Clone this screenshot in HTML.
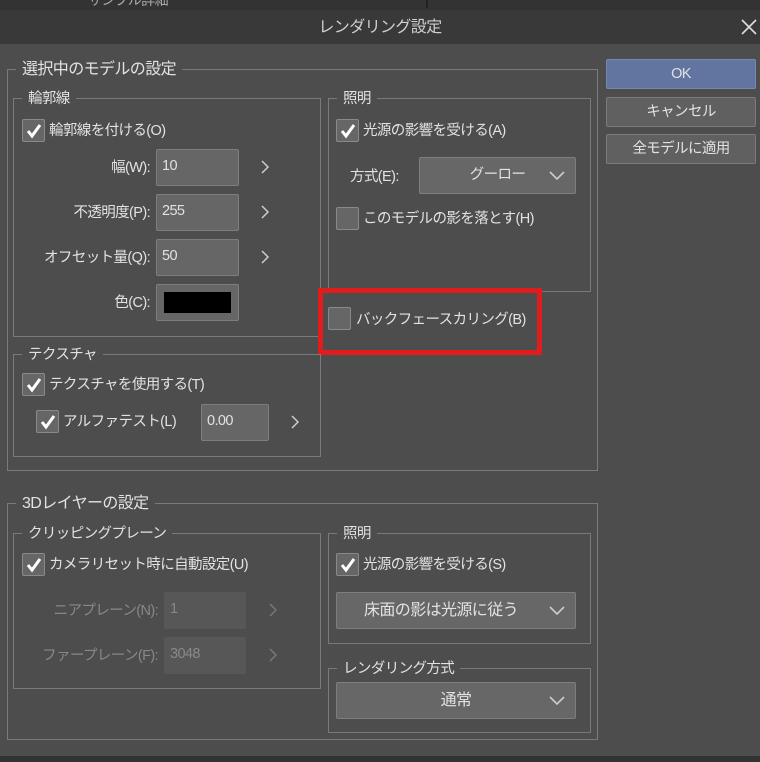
<!DOCTYPE html>
<html><head><meta charset="utf-8"><style>
*{margin:0;padding:0;box-sizing:border-box}
body{width:760px;height:762px;background:#4d4d4d;position:relative;overflow:hidden;font-family:"Liberation Sans","Noto Sans CJK JP",sans-serif;color:#e2e2e2;font-size:14.5px;letter-spacing:-0.6px}
.a{position:absolute;white-space:nowrap;line-height:25px}
.fr{position:absolute;border:1px solid #7a7a7a}
.lg{position:absolute;background:#4d4d4d;padding:0 6px;line-height:20px;top:-10px;left:8px}
.cb{position:absolute;width:23px;height:23px;border:1px solid #8a8a8a;background:#666;border-radius:2px}
.cb svg{position:absolute;left:2px;top:2px}
.in{position:absolute;background:#666;border:1px solid #7e7e7e;border-radius:2px;padding:6px 0 0 5px;line-height:20px}
.dis{background:#575757;border-color:#575757;color:#888}
.ar{position:absolute;width:10px;height:14px}
.dd{position:absolute;background:#676767;border:1px solid #7e7e7e;border-radius:2px;text-align:center;line-height:35px}
.dd svg{position:absolute;right:10px;top:13px}
.bt{position:absolute;left:606px;width:150px;height:30px;border:1px solid #7c7c7c;background:#606060;text-align:center;line-height:29px;border-radius:2px}
</style></head><body>
<div class="a" style="left:0;top:0;width:760px;height:44px;background:#393939"></div>
<div class="a" style="left:0;top:0;width:760px;height:10px;background:#333"></div>
<div class="a" style="left:88px;top:-12px;color:#aaa;font-size:14px">サンプル詳細</div>
<div class="a" style="left:426px;top:0;width:2px;height:8px;background:#222"></div>
<div class="a" style="left:0;top:15px;width:760px;text-align:center;color:#d0d0d0;font-size:16px">レンダリング設定</div>
<svg class="a" style="left:741px;top:19px" width="16" height="16"><path d="M1 1l14 14M15 1L1 15" stroke="#ddd" stroke-width="1.6"/></svg>

<div class="bt" style="top:59px;background:#6275a0;border-color:#7788b0">OK</div>
<div class="bt" style="top:97px">キャンセル</div>
<div class="bt" style="top:134px">全モデルに適用</div>

<div class="fr" style="left:7px;top:69px;width:591px;height:402px"><div class="lg" style="left:8px;font-size:16px">選択中のモデルの設定</div></div>
<div class="fr" style="left:13px;top:98px;width:308px;height:239px"><div class="lg">輪郭線</div></div>
<div class="cb" style="left:22px;top:119px"><svg width="18" height="18"><path d="M3 9l4 5 8-11" stroke="#fff" stroke-width="3" fill="none"/></svg></div>
<div class="a" style="left:49px;top:119px">輪郭線を付ける(O)</div>
<div class="a" style="left:60px;top:156px;width:90px;text-align:right">幅(W):</div>
<div class="in" style="left:156px;top:149px;width:83px;height:37px">10</div><svg class="ar" style="left:260px;top:160px"><path d="M2 1l6 6-6 6" stroke="#ccc" stroke-width="1.5" fill="none"/></svg>
<div class="a" style="left:20px;top:201px;width:130px;text-align:right">不透明度(P):</div>
<div class="in" style="left:156px;top:194px;width:83px;height:37px">255</div><svg class="ar" style="left:260px;top:205px"><path d="M2 1l6 6-6 6" stroke="#ccc" stroke-width="1.5" fill="none"/></svg>
<div class="a" style="left:10px;top:246px;width:140px;text-align:right">オフセット量(Q):</div>
<div class="in" style="left:156px;top:239px;width:83px;height:37px">50</div><svg class="ar" style="left:260px;top:250px"><path d="M2 1l6 6-6 6" stroke="#ccc" stroke-width="1.5" fill="none"/></svg>
<div class="a" style="left:60px;top:291px;width:90px;text-align:right">色(C):</div>
<div class="in" style="left:156px;top:284px;width:83px;height:37px;padding:0"><div style="position:absolute;left:7px;top:7px;width:67px;height:21px;background:#000"></div></div>

<div class="fr" style="left:328px;top:98px;width:263px;height:194px"><div class="lg">照明</div></div>
<div class="cb" style="left:336px;top:119px"><svg width="18" height="18"><path d="M3 9l4 5 8-11" stroke="#fff" stroke-width="3" fill="none"/></svg></div>
<div class="a" style="left:363px;top:119px">光源の影響を受ける(A)</div>
<div class="a" style="left:350px;top:165px">方式(E):</div>
<div class="dd" style="left:419px;top:157px;width:157px;height:37px">グーロー<svg width="16" height="10"><path d="M1 1l7 7 7-7" stroke="#ccc" stroke-width="1.6" fill="none"/></svg></div>
<div class="cb" style="left:336px;top:207px"></div>
<div class="a" style="left:363px;top:207px">このモデルの影を落とす(H)</div>

<div class="a" style="left:318px;top:288px;width:224px;height:67px;border:5px solid #e01c1c"></div>
<div class="cb" style="left:328px;top:307px"></div>
<div class="a" style="left:356px;top:308px">バックフェースカリング(B)</div>

<div class="fr" style="left:13px;top:354px;width:308px;height:103px"><div class="lg">テクスチャ</div></div>
<div class="cb" style="left:22px;top:373px"><svg width="18" height="18"><path d="M3 9l4 5 8-11" stroke="#fff" stroke-width="3" fill="none"/></svg></div>
<div class="a" style="left:49px;top:373px">テクスチャを使用する(T)</div>
<div class="cb" style="left:36px;top:410px"><svg width="18" height="18"><path d="M3 9l4 5 8-11" stroke="#fff" stroke-width="3" fill="none"/></svg></div>
<div class="a" style="left:63px;top:410px">アルファテスト(L)</div>
<div class="in" style="left:201px;top:404px;width:68px;height:37px">0.00</div><svg class="ar" style="left:290px;top:415px"><path d="M2 1l6 6-6 6" stroke="#ccc" stroke-width="1.5" fill="none"/></svg>

<div class="fr" style="left:7px;top:503px;width:591px;height:237px"><div class="lg" style="left:8px;font-size:16px">3Dレイヤーの設定</div></div>
<div class="fr" style="left:13px;top:533px;width:308px;height:156px"><div class="lg">クリッピングプレーン</div></div>
<div class="cb" style="left:22px;top:553px"><svg width="18" height="18"><path d="M3 9l4 5 8-11" stroke="#fff" stroke-width="3" fill="none"/></svg></div>
<div class="a" style="left:49px;top:553px">カメラリセット時に自動設定(U)</div>
<div class="a" style="left:20px;top:599px;width:138px;text-align:right;color:#888">ニアプレーン(N):</div>
<div class="in dis" style="left:164px;top:592px;width:82px;height:37px">1</div><svg class="ar" style="left:268px;top:603px"><path d="M2 1l6 6-6 6" stroke="#777" stroke-width="1.5" fill="none"/></svg>
<div class="a" style="left:10px;top:644px;width:148px;text-align:right;color:#888">ファープレーン(F):</div>
<div class="in dis" style="left:164px;top:637px;width:82px;height:37px">3048</div><svg class="ar" style="left:268px;top:648px"><path d="M2 1l6 6-6 6" stroke="#777" stroke-width="1.5" fill="none"/></svg>

<div class="fr" style="left:328px;top:533px;width:263px;height:111px"><div class="lg">照明</div></div>
<div class="cb" style="left:336px;top:553px"><svg width="18" height="18"><path d="M3 9l4 5 8-11" stroke="#fff" stroke-width="3" fill="none"/></svg></div>
<div class="a" style="left:363px;top:553px">光源の影響を受ける(S)</div>
<div class="dd" style="left:336px;top:592px;width:240px;height:37px;text-align:left;padding-left:27px;font-size:16px">床面の影は光源に従う<svg width="16" height="10"><path d="M1 1l7 7 7-7" stroke="#ccc" stroke-width="1.6" fill="none"/></svg></div>

<div class="fr" style="left:328px;top:668px;width:263px;height:65px"><div class="lg">レンダリング方式</div></div>
<div class="dd" style="left:336px;top:682px;width:240px;height:37px;font-size:16px">通常<svg width="16" height="10"><path d="M1 1l7 7 7-7" stroke="#ccc" stroke-width="1.6" fill="none"/></svg></div>

<div class="a" style="left:0;top:756px;width:760px;height:6px;background:#333"></div>
</body></html>
